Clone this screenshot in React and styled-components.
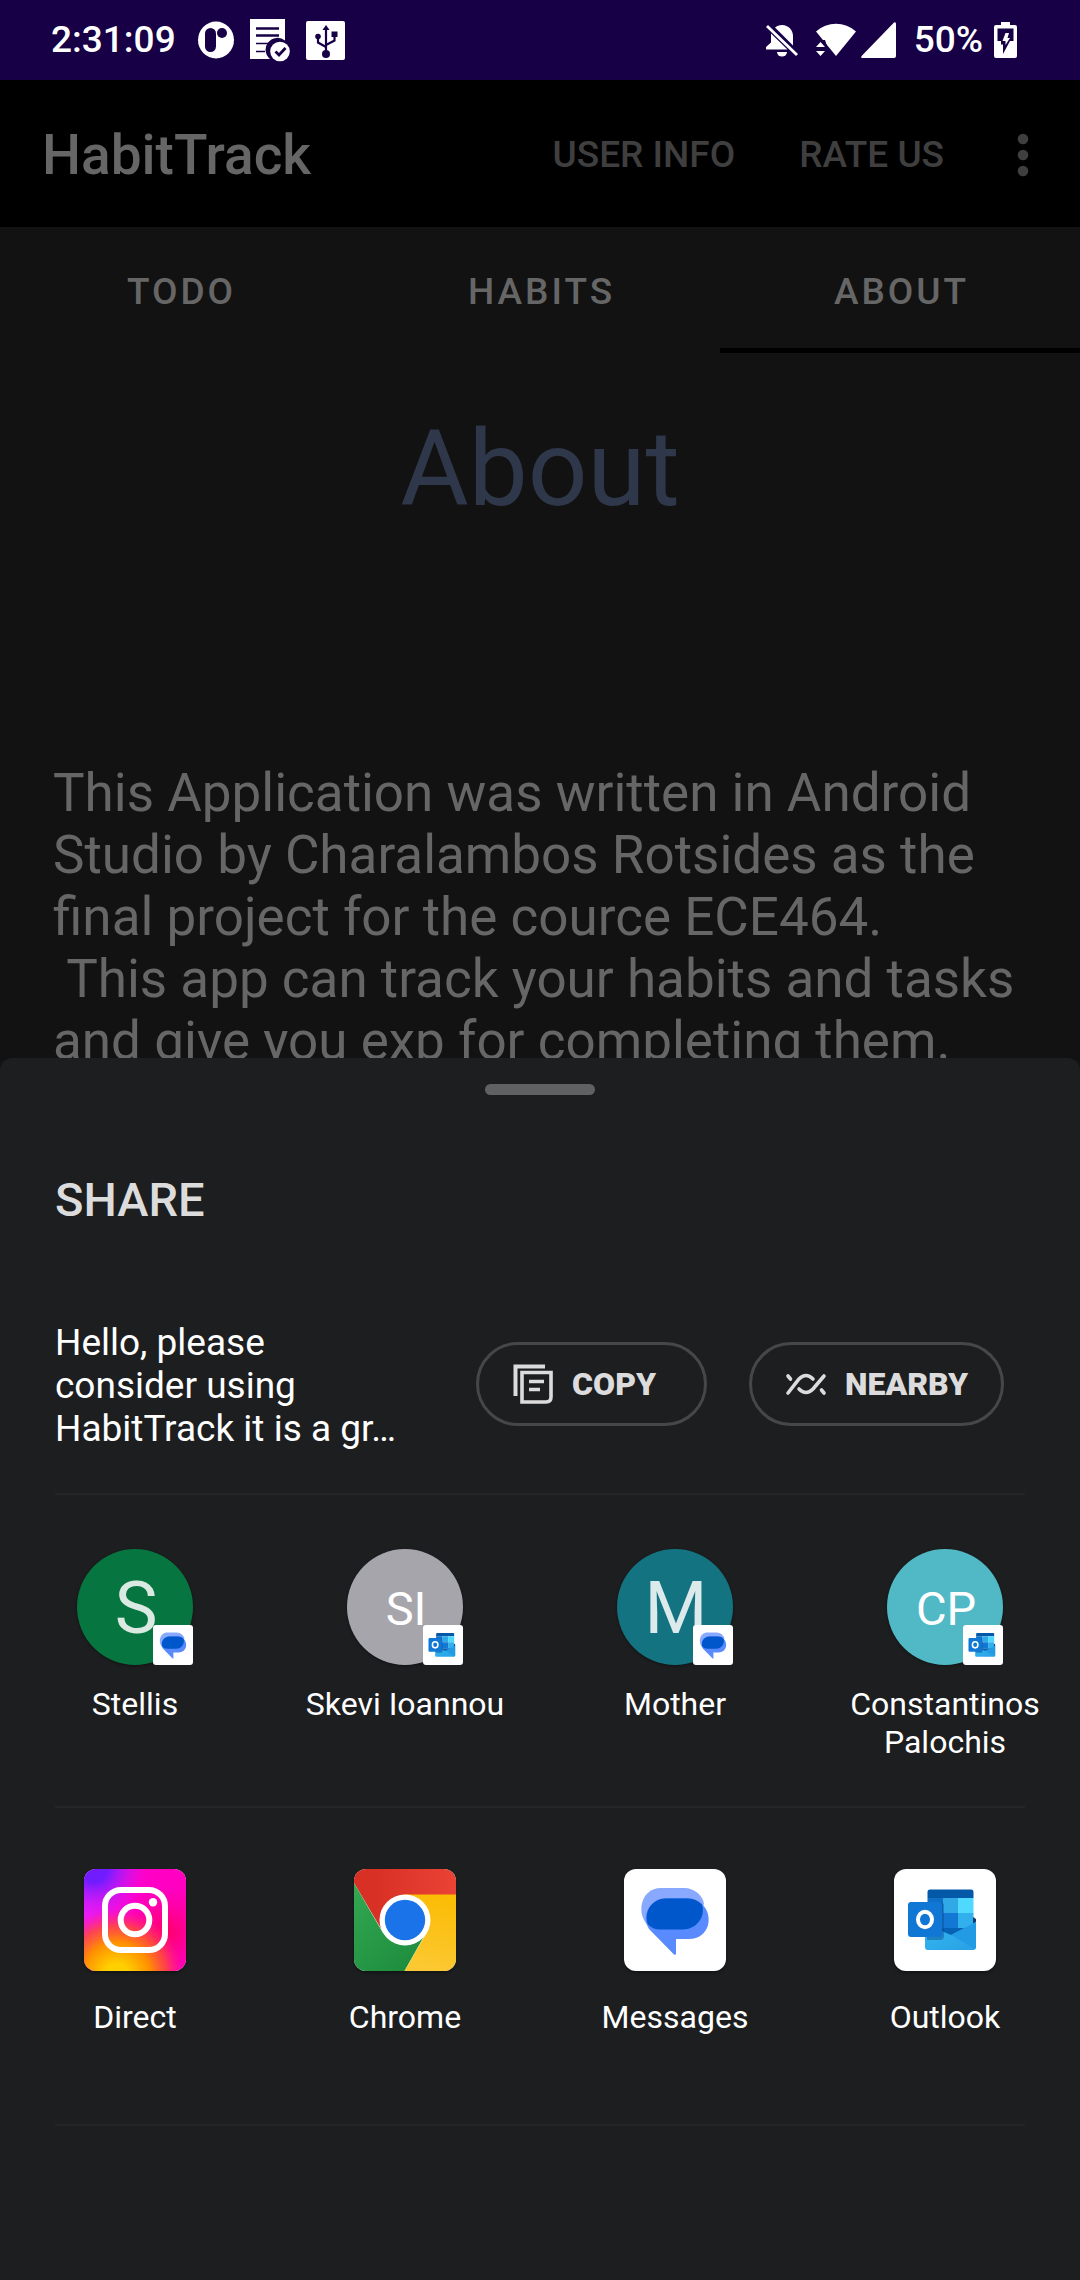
import React from "react";
import styled, { createGlobalStyle } from "styled-components";

const GlobalStyle = createGlobalStyle`
  * { box-sizing: border-box; }
  body { margin: 0; background: #121212; font-family: Roboto, "Noto Sans", sans-serif; }
  button { font: inherit; color: inherit; background: none; border: 0; padding: 0; cursor: pointer; }
  h1, h2, p, ul { margin: 0; padding: 0; }
  ul { list-style: none; }
  svg { display: block; flex: none; }
`;

const Screen = styled.div`
  display: flex;
  flex-direction: column;
  height: 100vh;
  overflow: hidden;
`;

const StatusBar = styled.header`
  display: flex;
  flex: none;
  justify-content: space-between;
  align-items: center;
  height: 80px;
  padding: 0 63px 0 51px;
  background: #170045;
  color: #fff;
  font-size: 37px;
  font-weight: 500;
  line-height: 44px;
`;

const StatusGroup = styled.div`
  display: flex;
  align-items: center;
  gap: ${(p) => p.$gap}px;
`;

const AppBar = styled.div`
  display: flex;
  flex: none;
  align-items: center;
  height: 147px;
  padding: 2px 43px 0 42px;
  background: #000;
  color: #3f3f3f;
`;

const AppName = styled.h1`
  flex: 1;
  color: #666;
  font-size: 55px;
  font-weight: 500;
  line-height: 64px;
`;

const BarAction = styled.button`
  margin-right: 64px;
  font-size: 37px;
  font-weight: 500;
  line-height: 44px;
`;

const MoreButton = styled.button`
  display: flex;
  justify-content: center;
  width: 29px;
`;

const Tabs = styled.nav`
  display: flex;
  flex: none;
  height: 126px;
`;

const Tab = styled.button`
  flex: 1;
  padding: 2px 0 0 3px;
  border-top: 5px solid transparent;
  border-bottom: 5px solid ${(p) => (p.$active ? "#000" : "transparent")};
  color: #666;
  font-size: 37px;
  font-weight: 500;
  letter-spacing: 3px;
`;

const Content = styled.main`
  flex: 1;
  min-height: 0;
  padding: 55px 53px 0;
  overflow: hidden;
`;

const PageTitle = styled.h2`
  margin-bottom: 231px;
  color: #2f374b;
  font-size: 105px;
  font-weight: 400;
  line-height: 123px;
  text-align: center;
`;

const Description = styled.p`
  color: #666;
  font-size: 53px;
  line-height: 62px;
  white-space: pre-wrap;
`;

const Sheet = styled.section`
  flex: none;
  padding: 26px 0 154px;
  border-radius: 12px 12px 0 0;
  background: #1d1e20;
  color: #fff;
`;

const Handle = styled.div`
  width: 110px;
  height: 11px;
  margin: 0 auto 77px;
  border-radius: 6px;
  background: #606163;
`;

const SheetTitle = styled.h2`
  margin: 0 55px 94px;
  color: #dcdcdc;
  font-size: 47px;
  font-weight: 500;
  line-height: 55px;
`;

const PreviewRow = styled.div`
  display: flex;
  align-items: center;
  justify-content: space-between;
  padding: 0 76px 0 55px;
`;

const Preview = styled.p`
  width: 346px;
  font-size: 37px;
  line-height: 43px;
`;

const PillGroup = styled.div`
  display: flex;
  gap: 42px;
  padding-bottom: 3px;
`;

const Pill = styled.button`
  display: flex;
  align-items: center;
  gap: 18px;
  height: 84px;
  padding: 0 ${(p) => p.$endPad}px 0 33px;
  border: 3px solid #464749;
  border-radius: 42px;
  color: #dcdcdc;
  font-size: 32px;
  font-weight: 900;
`;

const Divider = styled.hr`
  height: 2px;
  margin: ${(p) => p.$top}px 55px 0;
  border: 0;
  background: #242527;
`;

const TargetGrid = styled.ul`
  display: grid;
  grid-template-columns: repeat(4, 1fr);
  padding-top: ${(p) => p.$top}px;
`;

const Target = styled.button`
  display: flex;
  flex-direction: column;
  align-items: center;
  gap: ${(p) => p.$gap}px;
  width: 100%;
`;

const TargetLabel = styled.span`
  min-height: 76px;
  padding: 0 32px;
  font-size: 32px;
  line-height: 38px;
  text-align: center;
`;

const Avatar = styled.span`
  position: relative;
  display: flex;
  align-items: center;
  justify-content: center;
  width: 116px;
  height: 116px;
  padding: 3px 0 0 2px;
  border-radius: 50%;
  background: ${(p) => p.$color};
  color: ${(p) => (p.$small ? "#fff" : "rgba(255, 255, 255, 0.85)")};
  font-size: ${(p) => (p.$small ? 47 : 72)}px;
  line-height: 1;
  box-shadow: 0 1px 3px rgba(0, 0, 0, 0.4);
`;

const Badge = styled.span`
  position: absolute;
  right: 0;
  bottom: 0;
  overflow: hidden;
  border-radius: 3px;
  background: #fff;
`;

const AppTile = styled.span`
  overflow: hidden;
  border-radius: 12px;
  background: #fff;
  box-shadow: 0 2px 3px rgba(0, 0, 0, 0.35);
`;

const PocketIcon = () => (
  <svg width="36" height="38" viewBox="0 0 36 38">
    <ellipse cx="18" cy="19" rx="18" ry="18.5" fill="#fff" />
    <rect x="7" y="7" width="11" height="24" rx="5.5" fill="#170045" />
    <circle cx="24" cy="12" r="5" fill="#170045" />
  </svg>
);

const NoteIcon = () => (
  <svg width="40" height="43" viewBox="0 0 40 43">
    <path d="M0 0h35v21.5A11 11 0 0 0 20 40H0z" fill="#fff" />
    <path d="M6 9.5h23M6 16.5h23" stroke="#170045" strokeWidth="2.6" />
    <path d="M6 24.5h12M6 32.5h9" stroke="#170045" strokeWidth="1.4" />
    <circle cx="30" cy="32.5" r="9.8" fill="#fff" />
    <path d="M25.5 32.5l3.5 3.5 6.5-7" fill="none" stroke="#170045" strokeWidth="2.8" />
  </svg>
);

const UsbIcon = () => (
  <svg width="39" height="39" viewBox="0 0 39 39">
    <rect width="39" height="39" rx="2" fill="#fff" />
    <g fill="none" stroke="#170045" strokeWidth="2.2">
      <path d="M20 32V7M20 26l-8-4.5V16M20 24l8.5-4.5V13" />
    </g>
    <g fill="#170045">
      <path d="M20 4l3.5 5h-7z" />
      <circle cx="20" cy="33" r="4" />
      <circle cx="12" cy="15.5" r="2.8" />
      <path d="M25.5 10.5h6V16h-6z" />
    </g>
  </svg>
);

const BellOffIcon = () => (
  <svg width="32" height="33" viewBox="0 0 32 33">
    <path d="M9 3.5C11 2 13 1 16 1c6.5 0 11 5 11 11v9.500zM5 9.500l16.500 16H0v-2.500l5-4.500z" fill="#fff" />
    <path d="M11 28h10a5 4.5 0 0 1-10 0z" fill="#fff" />
    <path d="M1 2l30 29" stroke="#fff" strokeWidth="2.8" />
  </svg>
);

const WifiIcon = () => (
  <svg width="40" height="34" viewBox="0 0 40 34">
    <path d="M0 8.5a30 30 0 0 1 40 0L20 33z" fill="#fff" />
    <path d="M-1 17h10l3 9v8H-1z" fill="#170045" />
    <path d="M0 24l4.500-5L9 24zM0 28h9l-4.500 5z" fill="#fff" />
  </svg>
);

const SignalIcon = () => (
  <svg width="35" height="36" viewBox="0 0 35 36">
    <path d="M33 .6Q35-.6 35 2v32q0 2-2 2H1.5Q-.5 36 .6 34z" fill="#fff" />
  </svg>
);

const BatteryIcon = () => (
  <svg width="23" height="36" viewBox="0 0 23 36">
    <path d="M7 0h9v3h5q2 0 2 2v29q0 2-2 2H2q-2 0-2-2V5q0-2 2-2h5z" fill="#fff" />
    <path d="M3.500 6.500h16V19H16l-7 13v-9.500H7V19H3.500z" fill="#170045" />
    <path d="M11.500 11h3.500l-1.500 5H16l-4.500 7v-4H8.500z" fill="#fff" />
  </svg>
);

const MoreIcon = () => (
  <svg width="12" height="44" viewBox="0 0 12 44" fill="#3f3f3f">
    <circle cx="6" cy="6" r="5.3" />
    <circle cx="6" cy="22" r="5.3" />
    <circle cx="6" cy="38" r="5.3" />
  </svg>
);

const CopyIcon = () => (
  <svg width="42" height="42" viewBox="0 0 42 42" fill="none" stroke="#dcdcdc">
    <path d="M3.500 33V3.500H33" strokeWidth="4" />
    <path d="M10 9.500h29V34q0 5-5 5H10z" strokeWidth="3.600" />
    <path d="M17 18.500h15M17 26.500h11" strokeWidth="3.400" />
  </svg>
);

const NearbyIcon = () => (
  <svg width="42" height="24" viewBox="0 0 42 24" fill="none" stroke="#dcdcdc" strokeWidth="3.600" strokeLinecap="round">
    <path d="M3 21L14 7q7-7 14 0" />
    <path d="M14 17q7 7 14 0L39 4" />
    <path d="M3 4l2.500 3M36.500 18l2.500 3" />
  </svg>
);

const MessagesLogo = ({ size }) => (
  <svg width={size} height={size} viewBox="0 0 102 102">
    <path d="M37 19h23c11 0 19 8 20 16L68 52 24 56C12 46 16 19 37 19z" fill="#89a9ff" />
    <path d="M22 54C20 38 32 29 42 29h22c5 0 10 2 14 6 12 11 8 35-13 35H52v14.500q0 2-2 1L25 60z" fill="#598bff" />
    <path d="M42 29.500h22c5 0 10 2 14 6C82 48 72 60.500 59 60.500H36c-5 0-9-2-12-5C19 43 28 29.500 42 29.500z" fill="#0057cc" />
  </svg>
);

const OutlookLogo = ({ size }) => (
  <svg width={size} height={size} viewBox="0 0 102 102">
    <defs>
      <linearGradient id="envelope" x1="0" y1="0" x2="1" y2="1">
        <stop offset="0" stopColor="#35b8f1" />
        <stop offset="1" stopColor="#28a0e5" />
      </linearGradient>
    </defs>
    <path d="M33.500 23q0-2.500 2.500-2.500h41q2.500 0 2.500 2.500v6h-46z" fill="#0358a7" />
    <path d="M33.500 29H49v15H33.500z" fill="#0f6fc6" />
    <path d="M49 29h15v15H49z" fill="#32a9e7" />
    <path d="M64 29h15.500v15H64z" fill="#50d9ff" />
    <path d="M33.500 44H64v15H33.500z" fill="#1378d4" />
    <path d="M64 44h15.500v15H64z" fill="#32b0ed" />
    <path d="M33.500 59h46v9h-46z" fill="#0662b4" />
    <path d="M79 48l3 2v3l-3 2z" fill="#123b6d" />
    <path d="M31 55l26 11 25-13v25q0 3-3 3H34q-3 0-3-3z" fill="url(#envelope)" />
    <path d="M57 66l25-13v24q0 2-1 3z" fill="#229be4" />
    <path d="M34 33h12q4 0 4 4v30q0 4-4 4H33z" fill="#0a4c89" opacity=".45" />
    <rect x="14" y="33" width="34" height="35" rx="3" fill="#1078d4" />
    <ellipse cx="31" cy="50.5" rx="7" ry="7.8" fill="none" stroke="#fff" strokeWidth="4" />
  </svg>
);

const InstagramLogo = () => (
  <svg width="102" height="102" viewBox="0 0 102 102">
    <defs>
      <linearGradient id="igBase" x1="0" y1="0" x2="1" y2="0">
        <stop offset="0" stopColor="#f01cf5" />
        <stop offset=".5" stopColor="#ff00c8" />
        <stop offset="1" stopColor="#ff00c0" />
      </linearGradient>
      <radialGradient id="igViolet" cx=".1" cy="0" r=".52">
        <stop offset=".25" stopColor="#701cff" />
        <stop offset="1" stopColor="#d81cff" stopOpacity="0" />
      </radialGradient>
      <radialGradient id="igRed" cx=".8" cy=".62" r=".45">
        <stop offset="0" stopColor="#ff0064" />
        <stop offset="1" stopColor="#ff0090" stopOpacity="0" />
      </radialGradient>
      <radialGradient id="igWarm" cx=".32" cy="1.05" r=".66">
        <stop offset=".18" stopColor="#ffd000" />
        <stop offset=".5" stopColor="#ff9000" />
        <stop offset=".75" stopColor="#ff4a3a" stopOpacity=".85" />
        <stop offset="1" stopColor="#ff2080" stopOpacity="0" />
      </radialGradient>
    </defs>
    <path d="M0 0h102v102H0z" fill="url(#igBase)" />
    <path d="M0 0h102v102H0z" fill="url(#igViolet)" />
    <path d="M0 0h102v102H0z" fill="url(#igRed)" />
    <path d="M0 0h102v102H0z" fill="url(#igWarm)" />
    <g fill="none" stroke="#fff" strokeWidth="6">
      <rect x="21" y="21" width="60" height="60" rx="16" />
      <circle cx="51" cy="51" r="14.3" />
    </g>
    <circle cx="69" cy="33.3" r="4.2" fill="#fff" />
  </svg>
);

const ChromeLogo = () => (
  <svg width="102" height="102" viewBox="0 0 102 102">
    <defs>
      <linearGradient id="chRed" x1="0" x2="1">
        <stop offset=".2" stopColor="#d93025" />
        <stop offset="1" stopColor="#ea4335" />
      </linearGradient>
      <linearGradient id="chGreen" x1="0" y1="0" x2=".7" y2="1">
        <stop offset="0" stopColor="#34a853" />
        <stop offset="1" stopColor="#1e8e3e" />
      </linearGradient>
      <linearGradient id="chYellow" x1=".6" y1="0" x2=".4" y2="1">
        <stop offset="0" stopColor="#fbbc04" />
        <stop offset="1" stopColor="#fcc934" />
      </linearGradient>
    </defs>
    <path d="M0 0h102v26L51 51 29 63 0 14z" fill="url(#chRed)" />
    <path d="M0 14l29 50 44-2-22.500 40H0z" fill="url(#chGreen)" />
    <path d="M51 25.500h51V102H50.500L73 63z" fill="url(#chYellow)" />
    <circle cx="51" cy="51" r="25.5" fill="#fff" />
    <circle cx="51" cy="51" r="20.2" fill="#1a73e8" />
  </svg>
);

const contacts = [
  { name: "Stellis", initials: "S", color: "#07753f", Logo: MessagesLogo },
  { name: "Skevi Ioannou", initials: "SI", color: "#a7a5ac", Logo: OutlookLogo },
  { name: "Mother", initials: "M", color: "#147381", Logo: MessagesLogo },
  { name: "Constantinos Palochis", initials: "CP", color: "#50b9c5", Logo: OutlookLogo },
];

const apps = [
  { name: "Direct", Logo: InstagramLogo },
  { name: "Chrome", Logo: ChromeLogo },
  { name: "Messages", Logo: MessagesLogo },
  { name: "Outlook", Logo: OutlookLogo },
];

export default function App() {
  return (
    <Screen>
      <GlobalStyle />
      <StatusBar>
        <StatusGroup $gap={16}>
          <StatusGroup $gap={22}>
            <span>2:31:09</span>
            <PocketIcon />
          </StatusGroup>
          <NoteIcon />
          <UsbIcon />
        </StatusGroup>
        <StatusGroup $gap={18}>
          <BellOffIcon />
          <StatusGroup $gap={5}>
            <WifiIcon />
            <SignalIcon />
          </StatusGroup>
          <StatusGroup $gap={11}>
            <span>50%</span>
            <BatteryIcon />
          </StatusGroup>
        </StatusGroup>
      </StatusBar>
      <AppBar>
        <AppName>HabitTrack</AppName>
        <BarAction>USER INFO</BarAction>
        <BarAction>RATE US</BarAction>
        <MoreButton aria-label="More options">
          <MoreIcon />
        </MoreButton>
      </AppBar>
      <Tabs>
        <Tab>TODO</Tab>
        <Tab>HABITS</Tab>
        <Tab $active>ABOUT</Tab>
      </Tabs>
      <Content>
        <PageTitle>About</PageTitle>
        <Description>
          {"This Application was written in Android Studio by Charalambos Rotsides as the final project for the cource ECE464.\n This app can track your habits and tasks and give you exp for completing them."}
        </Description>
      </Content>
      <Sheet>
        <Handle />
        <SheetTitle>SHARE</SheetTitle>
        <PreviewRow>
          <Preview>Hello, please consider using HabitTrack it is a gr…</Preview>
          <PillGroup>
            <Pill $endPad={48}>
              <CopyIcon />
              COPY
            </Pill>
            <Pill $endPad={33}>
              <NearbyIcon />
              NEARBY
            </Pill>
          </PillGroup>
        </PreviewRow>
        <Divider $top={43} />
        <TargetGrid $top={54}>
          {contacts.map(({ name, initials, color, Logo }) => (
            <li key={name}>
              <Target $gap={20}>
                <Avatar $color={color} $small={initials.length > 1}>
                  {initials}
                  <Badge>
                    <Logo size={40} />
                  </Badge>
                </Avatar>
                <TargetLabel>{name}</TargetLabel>
              </Target>
            </li>
          ))}
        </TargetGrid>
        <Divider $top={45} />
        <TargetGrid $top={61}>
          {apps.map(({ name, Logo }) => (
            <li key={name}>
              <Target $gap={27}>
                <AppTile>
                  <Logo size={102} />
                </AppTile>
                <TargetLabel>{name}</TargetLabel>
              </Target>
            </li>
          ))}
        </TargetGrid>
        <Divider $top={50} />
      </Sheet>
    </Screen>
  );
}
